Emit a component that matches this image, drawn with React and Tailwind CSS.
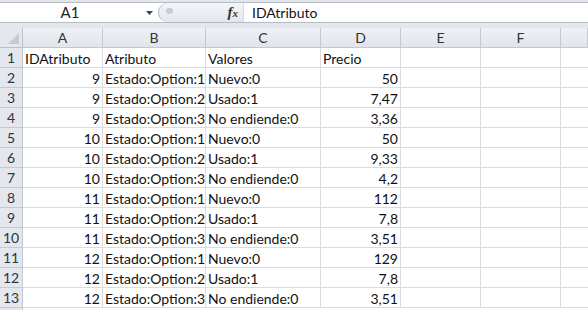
import React from "react";

const rows = [
  ["IDAtributo", "Atributo", "Valores", "Precio", true],
  ["9", "Estado:Option:1", "Nuevo:0", "50"],
  ["9", "Estado:Option:2", "Usado:1", "7,47"],
  ["9", "Estado:Option:3", "No endiende:0", "3,36"],
  ["10", "Estado:Option:1", "Nuevo:0", "50"],
  ["10", "Estado:Option:2", "Usado:1", "9,33"],
  ["10", "Estado:Option:3", "No endiende:0", "4,2"],
  ["11", "Estado:Option:1", "Nuevo:0", "112"],
  ["11", "Estado:Option:2", "Usado:1", "7,8"],
  ["11", "Estado:Option:3", "No endiende:0", "3,51"],
  ["12", "Estado:Option:1", "Nuevo:0", "129"],
  ["12", "Estado:Option:2", "Usado:1", "7,8"],
  ["12", "Estado:Option:3", "No endiende:0", "3,51"],
];

const cols = ["A", "B", "C", "D", "E", "F", ""];

export default function App() {
  return (
    <div
      className="w-[588px] h-[310px] overflow-hidden bg-white text-[#111] text-[14px]"
      style={{ fontFamily: "Lato, 'Open Sans', sans-serif" }}
    >
      {/* formula bar */}
      <div className="h-[28px] bg-[#e3e7ec] pt-[2px]">
        <div className="h-[21px] flex bg-white border-y border-[#b6bcc4]">
          <div className="w-[140px] flex items-center justify-center text-[15px] text-[#222]">A1</div>
          <div className="w-[18px] flex items-center justify-center">
            <svg width="7" height="4" viewBox="0 0 7 4"><path d="M0 0h7L3.5 4z" fill="#444" /></svg>
          </div>
          <div className="w-[85px] relative flex items-center justify-end pr-[5px] bg-gradient-to-b from-[#f3f5f8] to-[#e3e7ec] border-l border-[#aab3be] rounded-l-[10px]">
            <div className="absolute left-[7px] top-[5px] w-[7px] h-[6px] rounded-full bg-[#c6ccd3]" />
            <span className="text-[15px] italic font-bold text-[#333]" style={{ fontFamily: "'Liberation Serif', serif" }}>
              f<span className="text-[11px]">x</span>
            </span>
          </div>
          <div className="flex-1 flex items-center pl-[8px] border-l border-[#d6dbe1]">IDAtributo</div>
        </div>
      </div>
      {/* sheet */}
      <div className="grid grid-cols-[23px_80px_103px_115px_80px_80px_80px_1fr] auto-rows-[20px]">
        <div className="relative bg-[#e4e8ee] border-r border-b border-[#b8c0ca]">
          <svg className="absolute right-[3px] bottom-[3px]" width="11" height="11" viewBox="0 0 11 11"><path d="M11 0V11H0z" fill="#c4cad2" /></svg>
        </div>
        {cols.map((c, i) => (
          <div
            key={i}
            className="flex items-center justify-center bg-gradient-to-b from-[#eef1f5] to-[#e1e5eb] border-r border-b border-[#c3c9d1] text-[#333]"
          >
            {c}
          </div>
        ))}
        {rows.map((r, ri) => (
          <React.Fragment key={ri}>
            <div className="flex items-center justify-center bg-[#e4e8ee] border-r border-b border-[#c3c9d1] text-[#333]">
              {ri + 1}
            </div>
            <div className={`flex items-center border-r border-b border-[#dadcdd] px-[2px] pt-[1px] ${r[4] ? "justify-start" : "justify-end"}`}>{r[0]}</div>
            <div className="flex items-center border-r border-b border-[#dadcdd] px-[2px] pt-[1px] whitespace-nowrap">{r[1]}</div>
            <div className="flex items-center border-r border-b border-[#dadcdd] px-[2px] pt-[1px] whitespace-nowrap">{r[2]}</div>
            <div className={`flex items-center border-r border-b border-[#dadcdd] px-[2px] pt-[1px] ${r[4] ? "justify-start" : "justify-end"}`}>{r[3]}</div>
            <div className="border-r border-b border-[#dadcdd]" />
            <div className="border-r border-b border-[#dadcdd]" />
            <div className="border-b border-[#dadcdd]" />
          </React.Fragment>
        ))}
        <div className="bg-[#e4e8ee] border-r border-[#c3c9d1]" />
      </div>
    </div>
  );
}
